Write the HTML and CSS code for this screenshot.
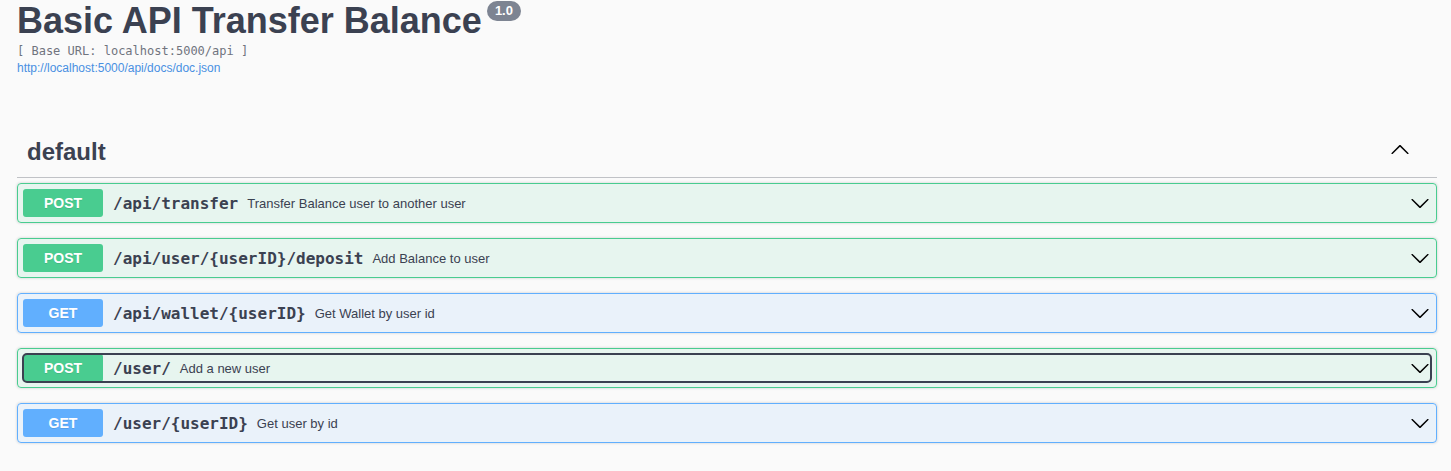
FILE: index.html
```html
<!DOCTYPE html>
<html lang="en">
<head>
<meta charset="utf-8">
<title>Basic API Transfer Balance</title>
<link rel="stylesheet" href="styles.css">
</head>
<body>
<div class="wrapper">
  <section class="info">
    <h2 class="title">Basic API Transfer Balance<span class="version">1.0</span></h2>
    <div class="base-url">[ Base URL: localhost:5000/api ]</div>
    <a class="doc-link" href="#">http://localhost:5000/api/docs/doc.json</a>
  </section>

  <section class="tag-section">
    <div class="tag-header">
      <h3 class="tag-title">default</h3>
      <svg class="tag-arrow" width="20" height="20" viewBox="0 0 20 20" aria-hidden="true"><path d="M17.418 14.908c.272.268.709.268.979 0s.271-.701 0-.969l-7.908-7.83c-.27-.268-.707-.268-.979 0l-7.908 7.830c-.27.268-.27.701 0 .969.271.268.709.268.979 0L10 7.767l7.418 7.141z"/></svg>
    </div>

    <div class="opblock post">
      <div class="summary">
        <div class="control">
          <span class="method">POST</span>
          <span class="path">/api/transfer</span>
          <span class="desc">Transfer Balance user to another user</span>
          <svg class="arrow" width="20" height="20" viewBox="0 0 20 20" aria-hidden="true"><path d="M17.418 6.109c.272-.268.709-.268.979 0s.271.701 0 .969l-7.908 7.83c-.27.268-.707.268-.979 0l-7.908-7.83c-.27-.268-.27-.701 0-.969.271-.268.709-.268.979 0L10 13.25l7.418-7.141z"/></svg>
        </div>
      </div>
    </div>

    <div class="opblock post">
      <div class="summary">
        <div class="control">
          <span class="method">POST</span>
          <span class="path">/api/user/{userID}/deposit</span>
          <span class="desc">Add Balance to user</span>
          <svg class="arrow" width="20" height="20" viewBox="0 0 20 20" aria-hidden="true"><path d="M17.418 6.109c.272-.268.709-.268.979 0s.271.701 0 .969l-7.908 7.83c-.27.268-.707.268-.979 0l-7.908-7.83c-.27-.268-.27-.701 0-.969.271-.268.709-.268.979 0L10 13.25l7.418-7.141z"/></svg>
        </div>
      </div>
    </div>

    <div class="opblock get">
      <div class="summary">
        <div class="control">
          <span class="method">GET</span>
          <span class="path">/api/wallet/{userID}</span>
          <span class="desc">Get Wallet by user id</span>
          <svg class="arrow" width="20" height="20" viewBox="0 0 20 20" aria-hidden="true"><path d="M17.418 6.109c.272-.268.709-.268.979 0s.271.701 0 .969l-7.908 7.83c-.27.268-.707.268-.979 0l-7.908-7.83c-.27-.268-.27-.701 0-.969.271-.268.709-.268.979 0L10 13.25l7.418-7.141z"/></svg>
        </div>
      </div>
    </div>

    <div class="opblock post">
      <div class="summary">
        <div class="control focused">
          <span class="method">POST</span>
          <span class="path">/user/</span>
          <span class="desc">Add a new user</span>
          <svg class="arrow" width="20" height="20" viewBox="0 0 20 20" aria-hidden="true"><path d="M17.418 6.109c.272-.268.709-.268.979 0s.271.701 0 .969l-7.908 7.83c-.27.268-.707.268-.979 0l-7.908-7.83c-.27-.268-.27-.701 0-.969.271-.268.709-.268.979 0L10 13.25l7.418-7.141z"/></svg>
        </div>
      </div>
    </div>

    <div class="opblock get">
      <div class="summary">
        <div class="control">
          <span class="method">GET</span>
          <span class="path">/user/{userID}</span>
          <span class="desc">Get user by id</span>
          <svg class="arrow" width="20" height="20" viewBox="0 0 20 20" aria-hidden="true"><path d="M17.418 6.109c.272-.268.709-.268.979 0s.271.701 0 .969l-7.908 7.83c-.27.268-.707.268-.979 0l-7.908-7.83c-.27-.268-.27-.701 0-.969.271-.268.709-.268.979 0L10 13.25l7.418-7.141z"/></svg>
        </div>
      </div>
    </div>
  </section>
</div>
</body>
</html>
```

FILE: styles.css
```css
html, body {
  margin: 0;
  padding: 0;
  background: #fafafa;
  color: #3b4151;
  font-family: "Liberation Sans", Arial, sans-serif;
}

.wrapper {
  padding: 0 14px 0 17px;
}

.info {
  margin: 0 0 52px;
}

.title {
  margin: 0 0 3px;
  font-size: 36px;
  line-height: 41px;
  font-weight: 700;
  color: #3b4151;
  display: flex;
  align-items: flex-start;
}

.version {
  display: inline-block;
  margin: 1px 0 0 5px;
  padding: 0 8px;
  height: 20px;
  line-height: 20px;
  border-radius: 57px;
  background: #7d8492;
  color: #fff;
  font-size: 13px;
  font-weight: 700;
}

.base-url {
  margin: 0 0 3px;
  font-family: "DejaVu Sans Mono", monospace;
  font-size: 12px;
  line-height: 14px;
  color: #70747e;
}

.doc-link {
  display: block;
  font-size: 12px;
  line-height: 14px;
  color: #4990e2;
  text-decoration: none;
}

.tag-section {
  display: flex;
  flex-direction: column;
}

.tag-header {
  display: flex;
  align-items: center;
  padding: 10px 20px 10px 10px;
  height: 30px;
  border-bottom: 1px solid rgba(59, 65, 81, 0.3);
  margin: 0 0 5px;
}

.tag-title {
  flex: 1;
  margin: 0;
  font-size: 24px;
  line-height: 28px;
  font-weight: 700;
  color: #3b4151;
}

.tag-arrow {
  margin: -6px 7px 0 0;
  fill: #000;
}

.opblock {
  margin: 0 0 15px;
  border: 1px solid;
  border-radius: 4px;
  box-shadow: 0 0 3px rgba(0, 0, 0, 0.19);
}

.opblock.post {
  border-color: #49cc90;
  background: rgba(73, 204, 144, 0.1);
}

.opblock.get {
  border-color: #61affe;
  background: rgba(97, 175, 254, 0.1);
}

.summary {
  padding: 5px;
}

.control {
  display: flex;
  align-items: center;
  border-radius: 4px;
}

.control.focused {
  outline: 2px solid #3b4151;
  outline-offset: -1px;
}

.method {
  min-width: 80px;
  padding: 6px 0;
  line-height: 16px;
  font-size: 14px;
  font-weight: 700;
  text-align: center;
  color: #fff;
  border-radius: 3px;
  text-shadow: 0 1px 0 rgba(0, 0, 0, 0.1);
}

.post .method {
  background: #49cc90;
}

.get .method {
  background: #61affe;
}

.path {
  padding: 0 9px 0 10px;
  font-family: "DejaVu Sans Mono", monospace;
  font-size: 16px;
  font-weight: 700;
  color: #3b4151;
}

.desc {
  flex: 1;
  font-size: 13px;
  color: #3b4151;
}

.arrow {
  fill: #000;
  margin-right: 1px;
}
```
